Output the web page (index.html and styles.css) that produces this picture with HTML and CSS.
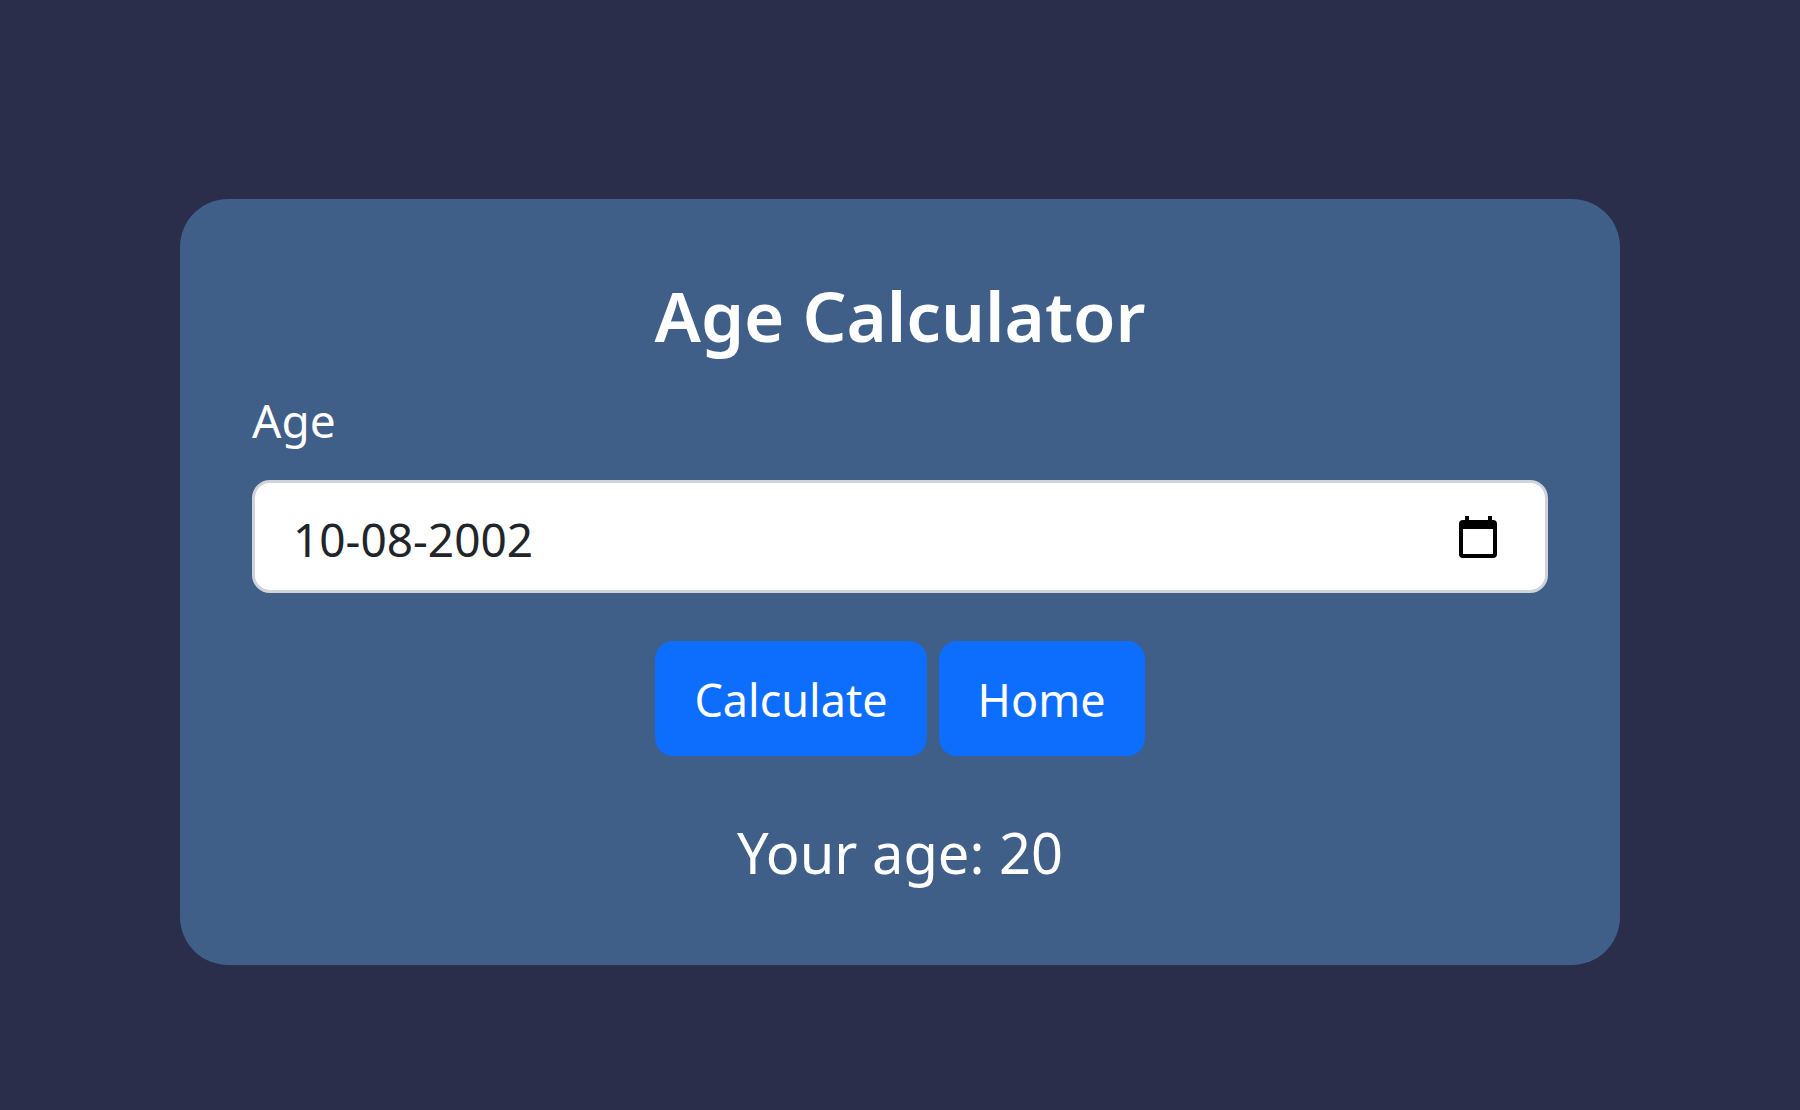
FILE: index.html
```html
<!DOCTYPE html>
<html lang="en">
<head>
<meta charset="utf-8">
<meta name="viewport" content="width=device-width, initial-scale=1">
<title>Age Calculator</title>
<link rel="stylesheet" href="styles.css">
</head>
<body>
<main class="card">
  <h1 class="title">Age Calculator</h1>
  <form class="form">
    <label class="label" for="dob">Age</label>
    <div class="field">
      <input class="input" id="dob" type="text" value="10-08-2002">
      <button class="picker" type="button" aria-label="Choose date">
        <svg class="picker-icon" viewBox="0 0 38 42" aria-hidden="true"><path fill-rule="evenodd" d="M6 0h4v4h19V0h4v4h1q4 0 4 4v30q0 4-4 4H4q-4 0-4-4V8q0-4 4-4h2zM4 13v25h30V13z"/></svg>
      </button>
    </div>
    <div class="actions">
      <button class="button" type="button">Calculate</button>
      <a class="button" href="#">Home</a>
    </div>
  </form>
  <p class="result">Your age: 20</p>
</main>
</body>
</html>
```
FILE: styles.css
```css
* { box-sizing: border-box; }

body {
  margin: 0;
  min-height: 100vh;
  padding: 199px 10% 0;
  background: #2b2e4a;
  color: #fff;
  font-family: "Segoe UI", "Noto Sans", "Open Sans", sans-serif;
  font-size: 46px;
  line-height: 72px;
}

.card {
  padding: 72px 72px 68px;
  border-radius: 48px;
  background: #3f5e88;
}

.title {
  margin: 0 0 24px;
  font-size: 69px;
  font-weight: 600;
  line-height: 89px;
  text-align: center;
}

.label {
  display: block;
  margin-bottom: 24px;
}

.field {
  display: flex;
  align-items: center;
  height: 113px;
  padding: 0 48px 0 38px;
  border: 3px solid #ced4da;
  border-radius: 18px;
  background: #fff;
}

.input {
  flex: 1;
  min-width: 0;
  height: 72px;
  padding: 4px 0 0;
  border: 0;
  outline: 0;
  background: none;
  color: #212529;
  font: inherit;
}

.picker {
  display: flex;
  padding: 0;
  border: 0;
  background: none;
}

.picker-icon {
  width: 38px;
  height: 42px;
}

.actions {
  display: flex;
  justify-content: center;
  gap: 12px;
  margin-top: 48px;
}

.button {
  padding: 23px 39px 20px;
  border: 0;
  border-radius: 18px;
  background: #0d6efd;
  color: #fff;
  font: inherit;
  font-size: 45px;
  line-height: 72px;
  text-decoration: none;
}

.result {
  margin: 51px 0 0;
  font-size: 56px;
  line-height: 90px;
  text-align: center;
}
```
